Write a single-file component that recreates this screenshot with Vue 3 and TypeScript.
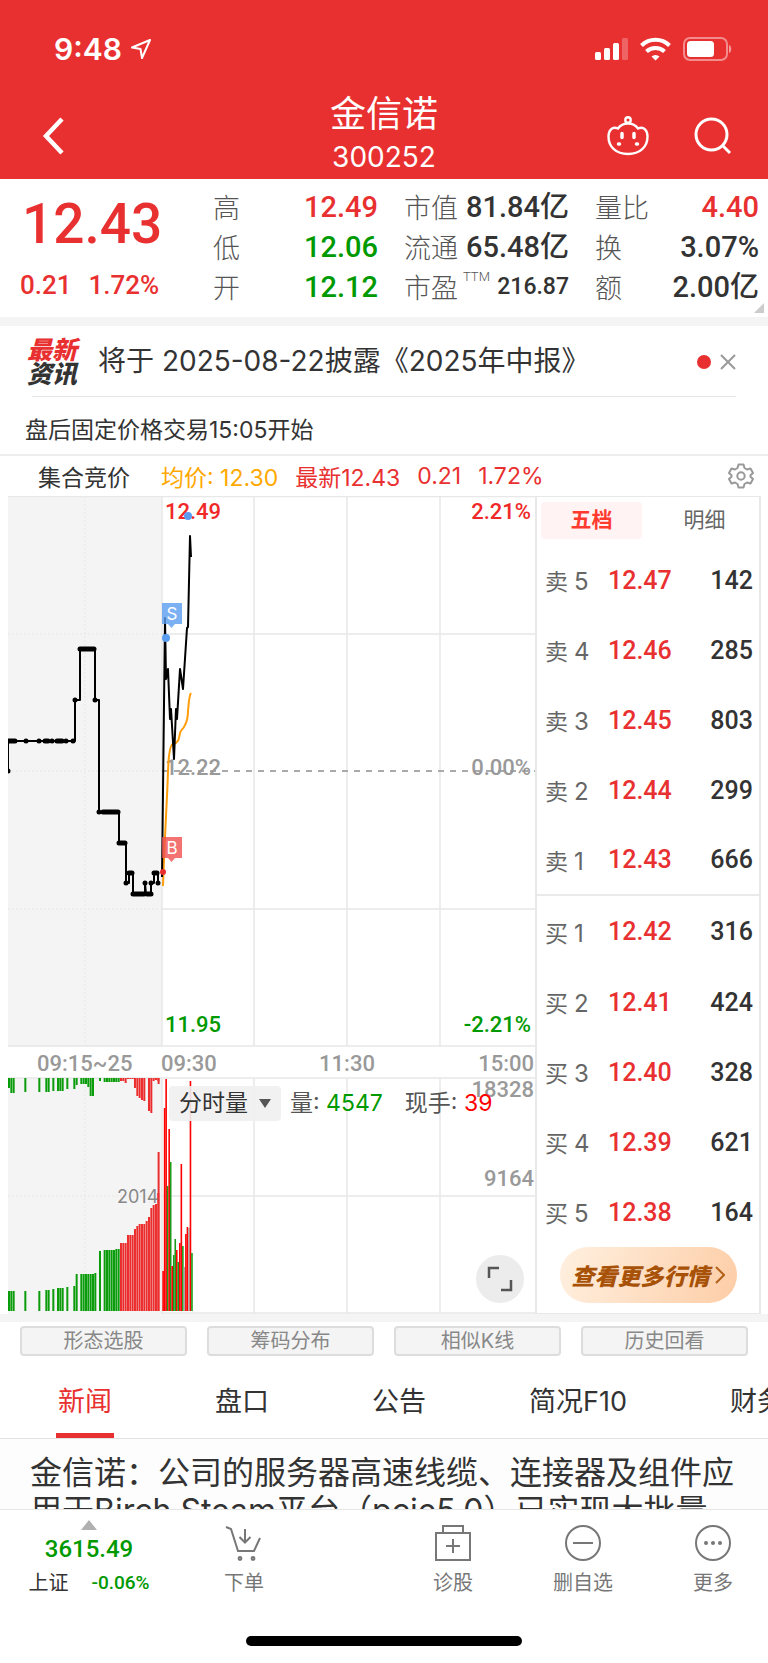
<script setup lang="ts">
import { computed, ref } from 'vue'

interface Quote { label: string; value: string; tone: string; unit?: string; sup?: string }
interface Level { side: string; n: number; price: string; vol: number }
interface Bar { x: number; y: number; h: number; w: number; tone: string }

const quoteColumns: Quote[][] = [
  [
    { label: '高', value: '12.49', tone: 'up' },
    { label: '低', value: '12.06', tone: 'down' },
    { label: '开', value: '12.12', tone: 'down' },
  ],
  [
    { label: '市值', value: '81.84', unit: '亿', tone: 'flat' },
    { label: '流通', value: '65.48', unit: '亿', tone: 'flat' },
    { label: '市盈', value: '216.87', tone: 'flat small', sup: 'TTM' },
  ],
  [
    { label: '量比', value: '4.40', tone: 'up' },
    { label: '换', value: '3.07%', tone: 'flat' },
    { label: '额', value: '2.00', unit: '亿', tone: 'flat' },
  ],
]

const sells: Level[] = [
  { side: '卖', n: 5, price: '12.47', vol: 142 },
  { side: '卖', n: 4, price: '12.46', vol: 285 },
  { side: '卖', n: 3, price: '12.45', vol: 803 },
  { side: '卖', n: 2, price: '12.44', vol: 299 },
  { side: '卖', n: 1, price: '12.43', vol: 666 },
]
const buys: Level[] = [
  { side: '买', n: 1, price: '12.42', vol: 316 },
  { side: '买', n: 2, price: '12.41', vol: 424 },
  { side: '买', n: 3, price: '12.40', vol: 328 },
  { side: '买', n: 4, price: '12.39', vol: 621 },
  { side: '买', n: 5, price: '12.38', vol: 164 },
]

const tools = ['形态选股', '筹码分布', '相似K线', '历史回看']
const tabs = ['新闻', '盘口', '公告', '简况F10', '财务']
const activeTab = ref('新闻')
const bookTab = ref('五档')

const auctionLine =
  '0,275 0,245 67,245 67,204 72,204 72,153 87,153 87,204 91,204 91,316 111,316 111,347 118,347 118,387 121,387 121,377 125,377 125,398 137,398 137,387 138,398 143,398 143,387 146,387 146,377 150,377 150,387'
const auctionRuns = [
  [0, 245, 7], [18, 245, 0], [31, 245, 0], [37, 245, 3], [44, 245, 0], [49, 245, 5], [58, 245, 0], [65, 245, 0],
  [67, 204, 0], [72, 153, 14], [87, 204, 0], [91, 316, 0], [95, 316, 15], [111, 347, 6], [118, 387, 0],
  [121, 377, 3], [125, 398, 11], [137, 387, 0], [139, 398, 4], [143, 387, 0], [146, 377, 3], [150, 387, 0], [0, 275, 0],
]
const priceLine =
  '154,381 157,122 158,183 160,173 162,223 163,213 166,263 168,213 169,223 172,173 175,193 179,132 180,131 182,40 183,61'
const averageLine =
  'M155,390 C156,360 158,320 159,300 C160,280 160,268 161,260 C162,252 163,248 165,248 C171,247 171,242 172,237 C173,234 174,234 176,231 C178,227 180,225 180,215 C181,205 181,200 183,197'

const slot = 2.333
const up = 'rise'
const down = 'fall'
// slot range, top of matched volume bar, bottom of unmatched volume bar
const auction: [number, number, number, number, string][] = [
  [0, 0, 795, 592, down], [1, 2, 795, 597, down], [7, 7, 795, 596, down], [13, 13, 795, 596, down],
  [16, 17, 794, 596, down], [19, 19, 793, 595, down], [21, 23, 792, 595, down], [25, 25, 791, 593, down],
  [28, 28, 790, 593, down], [29, 29, 778, 589, down], [31, 33, 778, 588, down], [34, 34, 778, 591, down],
  [35, 36, 778, 600, down], [37, 37, 777, 582, down], [39, 39, 755, 585, down], [41, 45, 754, 586, down],
  [46, 47, 753, 586, down], [48, 49, 747, 585, up], [50, 50, 747, 587, up], [51, 53, 739, 583, up],
  [54, 54, 733, 592, up], [55, 55, 730, 600, up], [56, 56, 728, 602, up], [57, 57, 728, 604, up],
  [58, 58, 728, 605, up], [59, 59, 725, 582, up], [60, 60, 721, 615, up], [61, 61, 712, 617, up],
  [62, 62, 709, 585, up], [63, 63, 708, 584, up], [64, 64, 697, 585, up],
]
const trading: [number, string][] = [
  [775, 'up'], [612, 'up'], [583, 'up'], [690, 'down'], [633, 'up'], [666, 'down'], [770, 'up'], [759, 'down'],
  [743, 'down'], [754, 'up'], [766, 'down'], [747, 'up'], [668, 'up'], [750, 'down'], [771, 'even'], [738, 'up'],
  [731, 'up'], [732, 'even'], [585, 'up'], [757, 'down'],
]
const base = 815

const bars = computed<Bar[]>(() => {
  const out: Bar[] = []
  for (const [from, to, top, bottom, tone] of auction) {
    for (let i = from; i <= to; i++) {
      out.push({ x: i * slot, y: top, h: base - top, w: 2, tone })
      out.push({ x: i * slot, y: 582, h: bottom - 582, w: 2, tone })
    }
  }
  out.push({ x: 149.6, y: 656, h: base - 656, w: 2, tone: up })
  out.push({ x: 149.6, y: 582, h: 6, w: 2, tone: up })
  trading.forEach(([top, tone], i) => {
    out.push({ x: 154.3 + i * 1.52, y: top, h: base - top, w: 1.6, tone })
  })
  return out
})
</script>

<template>
  <div class="page">
    <header class="top">
      <div class="status">
        <span class="clock">9:48</span>
        <svg class="loc" width="22" height="22" viewBox="0 0 22 22"><path d="M20 2 2 9.500l8.500 1.500L12 20z" /></svg>
        <svg class="radios" width="137" height="24" viewBox="0 0 137 24">
          <g fill="#fff">
            <rect x="0" y="15" width="6" height="8" rx="1.500" /><rect x="9" y="11" width="6" height="12" rx="1.500" />
            <rect x="18" y="6" width="6" height="17" rx="1.500" /><rect x="27" y="1" width="6" height="22" rx="1.500" opacity=".25" />
            <path d="M60.500 23.500 56.500 19.500a6 6 0 0 1 8 0z" />
          </g>
          <g fill="none" stroke="#fff" stroke-width="4">
            <path d="M46.500 8.500a20 20 0 0 1 28 0" /><path d="M51.500 14.500a13 13 0 0 1 18 0" />
          </g>
          <rect x="89" y="1" width="43" height="22" rx="6" fill="none" stroke="#fff" stroke-width="2" opacity=".45" />
          <rect x="92" y="4" width="27" height="16" rx="3.500" fill="#fff" />
          <path d="M134 8v8c3-1 3-7 0-8z" fill="#fff" opacity=".5" />
        </svg>
      </div>
      <div class="bar">
        <button class="icon back" aria-label="返回">
          <svg width="24" height="40" viewBox="0 0 24 40"><path d="M21 3 5 20l16 17" fill="none" stroke="#fff" stroke-width="4.500" /></svg>
        </button>
        <h1>金信诺<small>300252</small></h1>
        <div class="actions">
          <button class="icon" aria-label="智能助手">
            <svg width="42" height="42" viewBox="0 0 42 42" fill="none" stroke="#fff" stroke-width="2.400">
              <circle cx="21" cy="5" r="2.700" />
              <path d="M11 13.500C13.500 10 17 8.500 21 8.500s7.500 1.500 10 5c6-2.500 9.500 2 9.500 8C40.500 32 33 39 21 39S1.500 32 1.500 21.500c0-6 3.500-10.500 9.500-8z" />
              <path d="M15 18.500v4M27 18.500v4" stroke-width="3.500" stroke-linecap="round" />
              <path d="M11.500 29h1M29.500 29h1" stroke-width="3.500" stroke-linecap="round" />
            </svg>
          </button>
          <button class="icon" aria-label="搜索">
            <svg width="40" height="40" viewBox="0 0 40 40" fill="none" stroke="#fff" stroke-width="3"><circle cx="18.500" cy="18.500" r="15.500" /><path d="m29 29 8 8" /></svg>
          </button>
        </div>
      </div>
    </header>

    <section class="quote">
      <div class="last">
        <strong>12.43</strong>
        <p><span>0.21</span><span>1.72%</span></p>
      </div>
      <dl v-for="(col, i) in quoteColumns" :key="i">
        <div v-for="q in col" :key="q.label">
          <dt>{{ q.label }}<sup v-if="q.sup">{{ q.sup }}</sup></dt>
          <dd :class="q.tone">{{ q.value }}<b v-if="q.unit">{{ q.unit }}</b></dd>
        </div>
      </dl>
      <i class="corner"></i>
    </section>

    <section class="notice">
      <div class="brand"><span>最新</span><span>资讯</span></div>
      <a href="#report">将于 2025-08-22披露《2025年中报》</a>
      <i class="dot"></i>
      <button class="icon" aria-label="关闭">
        <svg width="16" height="18" viewBox="0 0 16 18"><path d="m1 2 14 14M15 2 1 16" stroke="#999" stroke-width="2" /></svg>
      </button>
    </section>
    <p class="after">盘后固定价格交易15:05开始</p>

    <section class="legend">
      <span>集合竞价</span>
      <span class="avg">均价: 12.30</span>
      <span class="up">最新12.43</span>
      <span class="up">0.21</span>
      <span class="up">1.72%</span>
      <button class="icon gear" aria-label="设置">
        <svg width="26" height="26" viewBox="0 0 26 26" fill="none" stroke="#999" stroke-width="2" stroke-linejoin="round">
          <path d="M10.500 1.500h5l1 3.500 2.500 1.500 3.500-1 2.500 4.500-2.500 2.300v1.400L25 16l-2.500 4.500-3.500-1-2.500 1.500-1 3.500h-5l-1-3.500L7 19.500l-3.500 1L1 16l2.500-2.300v-1.400L1 10l2.500-4.500 3.500 1L9.500 5z" />
          <circle cx="13" cy="13" r="3.700" />
        </svg>
      </button>
    </section>

    <section class="market">
      <div class="chart">
        <svg viewBox="0 0 527 818" role="img" aria-label="分时走势">
          <rect width="154" height="551" fill="#f4f4f4" />
          <rect y="582" width="154" height="236" fill="#f4f4f4" />
          <g class="grid">
            <path d="M0 .5H527M154 138H527M154 413H527M0 550H527M0 582H527M154 700H527M154 817H527" />
            <path d="M154 0V550M246 0V550M339 0V550M432 0V550M154 582V818M246 582V818M339 582V818M432 582V818" />
            <path class="dots" d="M0 138H154M0 275H154M0 413H154M77 0V550M0 700H154M77 582V818" />
          </g>
          <path class="zero" d="M154 275H527" />

          <g class="axis">
            <text x="157" y="23" class="t-up">12.49</text>
            <text x="523" y="23" class="t-up end">2.21%</text>
            <text x="157" y="279">12.22</text>
            <text x="523" y="279" class="end">0.00%</text>
            <text x="157" y="536" class="t-down">11.95</text>
            <text x="523" y="536" class="t-down end">-2.21%</text>
          </g>
          <g class="axis time">
            <text x="29" y="575">09:15~25</text>
            <text x="153" y="575">09:30</text>
            <text x="339" y="575" class="mid">11:30</text>
            <text x="526" y="575" class="end">15:00</text>
            <text x="526" y="601" class="end">18328</text>
            <text x="526" y="690" class="end">9164</text>
          </g>

          <rect v-for="(b, i) in bars" :key="i" :x="b.x" :y="b.y" :width="b.w" :height="b.h" :class="b.tone" />
          <text x="109" y="707" class="peak">2014</text>

          <polyline :points="auctionLine" class="price" />
          <path v-for="(r, i) in auctionRuns" :key="'r' + i" class="ticks" :d="`M${r[0]} ${r[1]}h${r[2]}`" />
          <path :d="averageLine" class="average" />
          <polyline :points="priceLine" class="price" />
          <g fill="#5a9df0"><circle cx="180" cy="20" r="4" /><circle cx="158" cy="142" r="4" /></g>
          <circle cx="155" cy="376" r="3" fill="#e93030" />
          <g class="flag">
            <path d="M154 107h20v21h-7l-3.500 4-3.500-4h-6z" fill="#5a9df0" /><text x="164" y="124">S</text>
            <path d="M154 341h20v21h-7l-3.500 4-3.500-4h-6z" fill="#f05050" /><text x="164" y="358">B</text>
          </g>
        </svg>
        <div class="volume">
          <button>分时量<i></i></button>
          <span>量: <b class="green">4547</b></span>
          <span>现手: <b class="red">39</b></span>
        </div>
        <button class="expand" aria-label="全屏">
          <svg width="26" height="26" viewBox="0 0 26 26" fill="none" stroke="#555" stroke-width="2.500"><path d="M2 12V2h10M24 14v10H14" /></svg>
        </button>
      </div>

      <div class="book">
        <div class="book-tabs">
          <button v-for="t in ['五档', '明细']" :key="t" :class="{ on: bookTab === t }" @click="bookTab = t">{{ t }}</button>
        </div>
        <table>
          <tbody v-for="(side, i) in [sells, buys]" :key="i">
            <tr v-for="l in side" :key="l.n">
              <th scope="row">{{ l.side }}<span>{{ l.n }}</span></th>
              <td class="up">{{ l.price }}</td>
              <td class="vol">{{ l.vol }}</td>
            </tr>
          </tbody>
        </table>
        <button class="more">查看更多行情
          <svg width="10" height="18" viewBox="0 0 10 18"><path d="m1 1 8 8-8 8" fill="none" stroke="#b3611a" stroke-width="2" /></svg>
        </button>
      </div>
    </section>

    <div class="tools">
      <button v-for="t in tools" :key="t">{{ t }}</button>
    </div>

    <nav class="tabs">
      <button v-for="t in tabs" :key="t" :class="{ on: activeTab === t }" @click="activeTab = t">{{ t }}</button>
    </nav>

    <article class="story">
      <a href="#story">金信诺：公司的服务器高速线缆、连接器及组件应用于Birch Steam平台（pcie5.0）已实现大批量</a>
    </article>

    <footer class="dock">
      <div class="items">
        <a class="index" href="#index">
          <i></i>
          <strong>3615.49</strong>
          <span><em>上证</em><b>-0.06%</b></span>
        </a>
        <button class="trade">
          <svg width="38" height="38" viewBox="0 0 38 38">
            <path d="M1 3l5 2 7 22h16l6-13M20 5v13M14.500 13l5.500 5.500 5.500-5.500" /><circle cx="15" cy="34.500" r="1.400" /><circle cx="28" cy="34.500" r="1.400" />
          </svg>下单
        </button>
        <div class="right">
          <button>
            <svg width="38" height="38" viewBox="0 0 38 38"><path d="M2 9h34v27H2zM9 9V2h20v7M19 15v14M12 22h14" /></svg>诊股
          </button>
          <button>
            <svg width="38" height="38" viewBox="0 0 38 38"><circle cx="19" cy="19" r="17" /><path d="M9 19h20" /></svg>删自选
          </button>
          <button>
            <svg width="38" height="38" viewBox="0 0 38 38"><circle cx="19" cy="19" r="17" /><g class="solid"><circle cx="12" cy="19" r="2" /><circle cx="19" cy="19" r="2" /><circle cx="26" cy="19" r="2" /></g></svg>更多
          </button>
        </div>
      </div>
      <i class="home"></i>
    </footer>
  </div>
</template>

<style>
body { margin: 0; background: #fff; }
</style>

<style scoped>
.page { font-family: Inter, "Noto Sans CJK SC", sans-serif; color: #333; background: #fff; overflow: hidden; }
* { box-sizing: border-box; }
button { border: 0; padding: 0; margin: 0; background: none; font: inherit; color: inherit; white-space: nowrap; }
a { color: inherit; text-decoration: none; }
p, h1, dl, dd { margin: 0; }
svg { display: block; flex: none; }
.icon { display: flex; }
.up { color: #e93030; }

.top { background: #e93030; color: #fff; height: 179px; }
.status { display: flex; align-items: center; height: 92px; padding: 6px 36px 0 54px; }
.clock { font-size: 30px; font-weight: 600; }
.loc { margin-left: 8px; fill: none; stroke: #fff; stroke-width: 2; stroke-linejoin: round; }
.radios { margin-left: auto; }
.bar { display: grid; grid-template-columns: 1fr auto 1fr; align-items: center; height: 87px; padding: 0 35px; }
.back { margin-left: 6px; }
h1 { font-size: 36px; font-weight: 400; line-height: 42px; text-align: center; }
h1 small { display: block; font-size: 28px; line-height: 44px; }
.actions { display: flex; justify-content: flex-end; align-items: center; gap: 44px; }

.quote { position: relative; display: grid; grid-template-columns: 187px 165px 165px 1fr; column-gap: 26px; height: 138px; padding: 8px 9px 0 0; font-family: Roboto, "Noto Sans CJK SC", sans-serif; }
.last { color: #e93030; padding-left: 22px; }
.last strong { display: block; font-size: 55px; font-weight: 500; line-height: 74px; }
.last p { display: flex; gap: 17px; font-size: 26px; font-weight: 500; line-height: 38px; margin: 5px 0 0 -2px; }
dl { display: grid; grid-template-rows: repeat(3, 40px); }
dl div { display: flex; justify-content: space-between; align-items: center; line-height: 38px; white-space: nowrap; }
dt { padding-top: 3px; font-size: 27px; font-weight: 300; color: #555; }
sup { display: inline-block; vertical-align: top; font-size: 13px; line-height: 14px; margin-left: 5px; }
dd { font-size: 29px; font-weight: 500; }
dd b { font-weight: 500; }
dd.small { font-size: 23px; }
.flat { color: #333; }
.down { color: #090; }
.corner { position: absolute; right: 4px; bottom: 4px; border-left: 10px solid transparent; border-bottom: 10px solid #ccc; }

.notice { position: relative; display: flex; align-items: center; height: 80px; padding: 0 32px 0 27px; border-top: 9px solid #f4f4f4; font-size: 28px; }
.notice::after { content: ""; position: absolute; left: 32px; right: 32px; bottom: 0; border-bottom: 1px solid #e6e6e6; }
.notice a { padding-bottom: 5px; }
.brand { display: grid; font-size: 25px; line-height: 24px; font-weight: 900; font-style: italic; margin-right: 21px; }
.brand span:first-child { color: #e93030; }
.dot { width: 14px; height: 14px; border-radius: 50%; background: #e93030; margin: 0 9px 0 auto; }
.after { height: 59px; padding: 4px 25px 0; font-size: 23px; line-height: 58px; border-bottom: 2px solid #eee; }

.legend { display: flex; align-items: center; height: 40px; padding: 0 14px 0 38px; font-size: 23px; gap: 17px; }
.legend .avg { color: #ffa800; margin-left: 14px; }
.gear { margin-left: auto; }

.market { display: grid; grid-template-columns: 1fr 226px; padding: 0 7px 0 8px; }
.chart { position: relative; }
.chart > svg { width: 100%; height: auto; }
.grid { fill: none; stroke: #e8e8e8; stroke-width: 1.5; }
.dots { stroke: #ebebeb; stroke-dasharray: 2 2; }
.zero { stroke: #aaa; stroke-width: 2; stroke-dasharray: 6 6; }
.axis { font-family: Roboto, sans-serif; font-size: 22px; font-weight: 500; fill: #999; }
.t-up { fill: #f02828; }
.t-down { fill: #090; }
.end { text-anchor: end; }
.mid { text-anchor: middle; }
.peak { font-size: 18px; fill: #888; }
rect.rise { fill: #ec2d2d; }
rect.fall { fill: #0a9c0a; }
rect.up { fill: #f00; }
rect.down { fill: #1a9c1a; }
rect.even { fill: #aaa; }
.price { fill: none; stroke: #000; stroke-width: 2; stroke-linejoin: round; }
.ticks { stroke: #000; stroke-width: 5; stroke-linecap: round; }
.average { fill: none; stroke: #ff9d0a; stroke-width: 2; }
.flag path { opacity: .8; }
.flag text { fill: #fff; font-size: 17px; text-anchor: middle; }
.volume { position: absolute; left: 161px; top: 590px; display: flex; align-items: center; height: 35px; font-size: 23px; line-height: 32px; color: #555; white-space: nowrap; }
.volume button { display: flex; align-items: center; gap: 11px; height: 35px; padding: 0 10px 1px; border-radius: 4px; background: rgba(240, 240, 240, .9); color: #333; margin-right: 9px; }
.volume i { border: 6px solid transparent; border-top: 9px solid #555; border-bottom: 0; }
.volume span { padding-bottom: 1px; }
.volume span + span { margin-left: 22px; }
.volume b { font-weight: 400; }
.green { color: #090; }
.red { color: #f00; }
.expand { position: absolute; right: 11px; bottom: 11px; display: grid; place-items: center; width: 48px; height: 48px; border-radius: 50%; background: #ececec; }

.book { display: flex; flex-direction: column; border: solid #e8e8e8; border-width: 1px 2px; }
.book-tabs { display: grid; grid-template-columns: 1fr 1fr; gap: 12px; height: 48px; padding: 5px 4px 6px; font-size: 21px; line-height: 32px; color: #666; }
.book-tabs button { padding-bottom: 1px; }
.book-tabs .on { background: #fff3f3; color: #ff3b30; font-weight: 700; border-radius: 4px; }
table { width: 100%; border-collapse: collapse; table-layout: fixed; font-family: Roboto, sans-serif; }
tr { height: 70px; }
tbody + tbody { border-top: 2px solid #eaeaea; }
tbody + tbody tr:first-child { height: 72px; }
th, td { padding: 0; font-size: 25px; font-weight: 500; text-align: left; }
th { width: 71px; padding-left: 8px; font: 400 23px Inter, "Noto Sans CJK SC", sans-serif; color: #666; }
th span { margin-left: 6px; font-size: 24px; }
.vol { text-align: right; padding-right: 6px; }
.more { align-self: center; display: flex; align-items: center; justify-content: center; gap: 5px; width: 177px; height: 56px; border-radius: 28px; background: linear-gradient(110deg, #fff0e0, #fdcda6); font-size: 23px; font-weight: 900; font-style: italic; color: #a85208; }

.tools { display: grid; grid-template-columns: repeat(4, 1fr); gap: 20px; padding: 4px 20px 0; border-top: 8px solid #f4f4f4; }
.tools button { height: 30px; border: 2px solid #ddd; border-radius: 4px; background: #f4f4f4; color: #888; font-size: 20px; line-height: 26px; }

.tabs { display: flex; gap: 103px; height: 83px; padding: 8px 0 0 58px; border-bottom: 1px solid #e2e2e2; font-size: 27px; overflow: hidden; }
.tabs button { position: relative; padding-bottom: 4px; }
.tabs .on { color: #e93030; }
.tabs .on::after { content: ""; position: absolute; left: -2px; right: -2px; bottom: 0; height: 5px; background: #e93030; }

.story { height: 70px; padding: 15px 30px 0; font-size: 32px; line-height: 38px; overflow: hidden; background: #fdfdfd; }

.dock { display: flex; flex-direction: column; align-items: center; justify-content: space-between; height: 154px; padding-bottom: 17px; border-top: 1px solid #e6e6e6; }
.items { display: flex; width: 100%; padding: 10px 25px 0 0; font-size: 20px; color: #777; }
.index { display: flex; flex-direction: column; align-items: center; width: 178px; font-family: Roboto, "Noto Sans CJK SC", sans-serif; color: #090; }
.index i { border: 8px solid transparent; border-top: 0; border-bottom: 10px solid #b0b0b0; }
.index strong { font-size: 24px; font-weight: 500; line-height: 38px; }
.index span { display: flex; gap: 23px; line-height: 30px; }
.index em { font-style: normal; color: #333; }
.index b { font-size: 19px; font-weight: 500; }
.dock button { display: flex; flex-direction: column; align-items: center; gap: 4px; width: 60px; padding-top: 4px; line-height: 34px; }
.trade { margin-left: 36px; }
.right { display: flex; gap: 70px; margin-left: auto; }
.dock svg { fill: none; stroke: #777; stroke-width: 2; }
.dock .solid { fill: #777; stroke: none; }
.home { width: 36%; height: 10px; border-radius: 5px; background: #000; }
</style>
